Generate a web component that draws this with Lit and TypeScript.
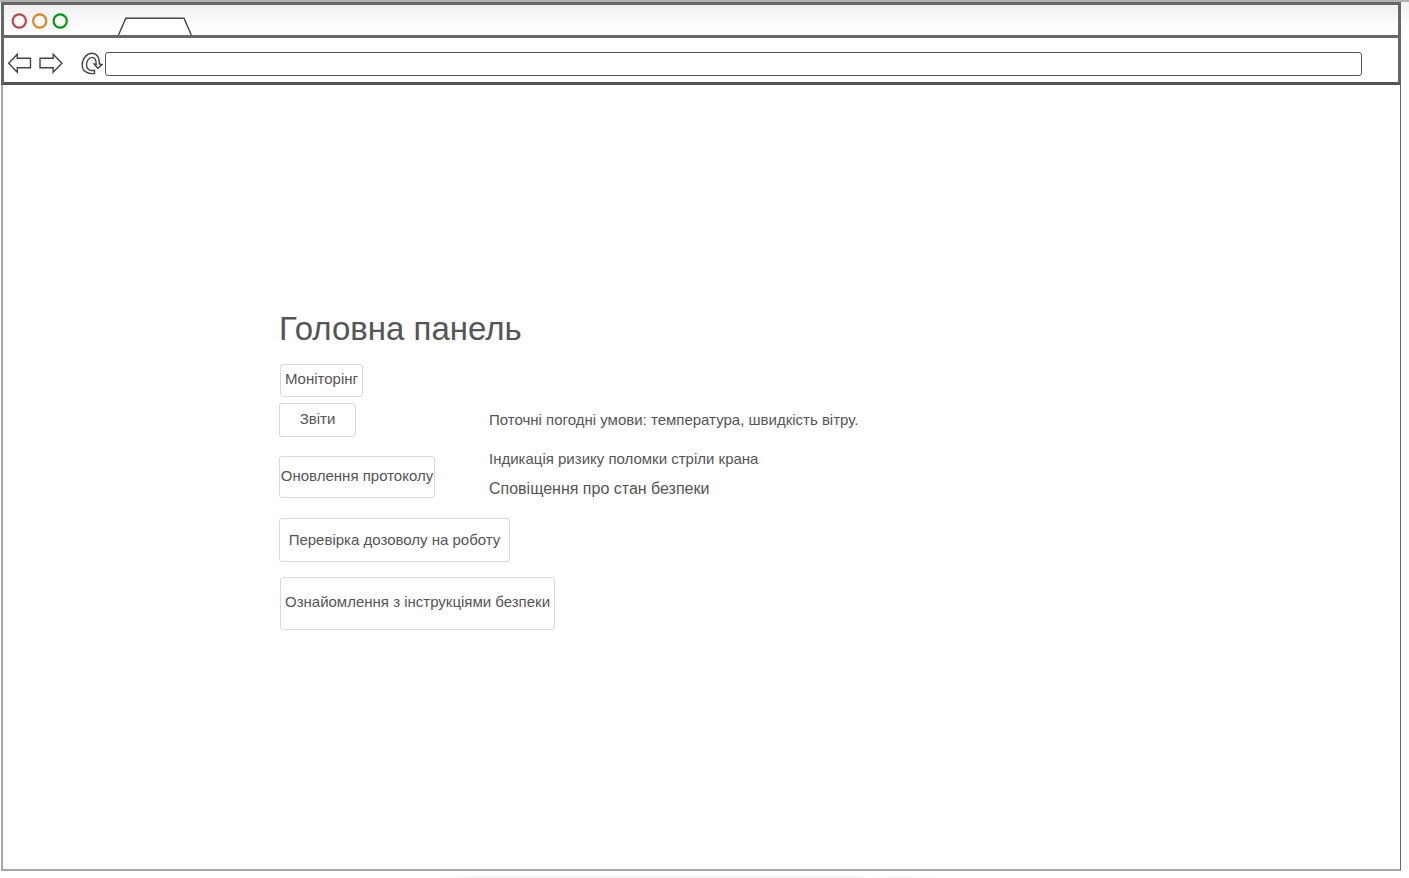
import { LitElement, html, css, svg } from "lit";
import { customElement } from "lit/decorators.js";

const NAV = [
  { label: "Моніторінг", size: "monitoring" },
  { label: "Звіти", size: "reports" },
  { label: "Оновлення протоколу", size: "protocol" },
  { label: "Перевірка дозоволу на роботу", size: "permit" },
  { label: "Ознайомлення з інструкціями безпеки", size: "safety" },
];

const arrow = svg`<path d="M1.2 10.2 L9.8 1.2 L9.8 5.2 L23 5.2 L23 14.8 L9.8 14.8 L9.8 19.2 Z"/>`;

@customElement("browser-bar")
export class BrowserBar extends LitElement {
  static styles = css`
    :host { display: block; }
    .tabs {
      display: flex;
      align-items: flex-end;
      box-sizing: border-box;
      height: 36px;
      border: 3px solid #666;
      padding-left: 7px;
      background: linear-gradient(#f0f0f0, #fdfdfd 22px, #fff);
    }
    .lights { display: block; margin-bottom: 5px; }
    .lights circle { stroke-width: 2.2; }
    .red { stroke: #b8474a; }
    .amber { stroke: #dc851c; }
    .green { stroke: #009a0b; }
    .tab { display: block; margin-left: 48px; }
    .tools {
      display: flex;
      align-items: center;
      box-sizing: border-box;
      height: 47px;
      border: 3px solid #666;
      border-top: 0;
      border-bottom-color: #555;
      padding: 6px 36px 0 3px;
      background: #fff;
    }
    button {
      display: block;
      padding: 0;
      border: 0;
      background: none;
    }
    svg { display: block; fill: none; stroke: #444; stroke-width: 1.4; }
    .forward { margin-left: 7px; }
    .reload { margin-left: 18px; }
    .address {
      flex: 1;
      min-width: 0;
      box-sizing: border-box;
      height: 24px;
      margin: 1px 0 0 2px;
      padding: 0 8px;
      border: 1px solid #555;
      border-radius: 3px;
      background: #fff;
      font: 15px "Liberation Sans", Arial, sans-serif;
      color: #555;
    }
  `;

  render() {
    return html`
      <div class="tabs">
        <svg class="lights" width="58" height="18" viewBox="0 0 58 18" aria-hidden="true">
          <circle class="red" cx="8.3" cy="9" r="6.6"/>
          <circle class="amber" cx="28.7" cy="9" r="6.6"/>
          <circle class="green" cx="49.2" cy="9" r="6.6"/>
        </svg>
        <svg class="tab" width="76" height="18" viewBox="0 0 76 18" aria-hidden="true">
          <path d="M1.5 18 L8.8 1.2 L67 1.2 L74.3 18" fill="#fff"/>
        </svg>
      </div>
      <div class="tools">
        <button type="button" aria-label="Назад">
          <svg width="25" height="21" viewBox="0 0 24 21">${arrow}</svg>
        </button>
        <button type="button" class="forward" aria-label="Вперед">
          <svg width="24" height="21" viewBox="0 0 24 21"><g transform="translate(24 0) scale(-1 1)">${arrow}</g></svg>
        </button>
        <button type="button" class="reload" aria-label="Оновити">
          <svg width="22" height="23" viewBox="0 0 22 23">
            <path d="M13.5 21.4 C8 22.4 1.2 20 1.2 13 C1.2 6.6 5.8 1.2 11 1.2 C16 1.2 18.8 6.2 18.2 12 L21 12.6 L16.8 16.2 L13.2 12 L15.2 12.2 C15.2 8.2 13.8 5.4 11 5.4 C7.8 5.4 5.5 9.4 5.5 13 C5.5 17 8.6 19.2 13.5 18.4 Z"/>
          </svg>
        </button>
        <input class="address" type="text" aria-label="Адреса" />
      </div>
    `;
  }
}

@customElement("app-root")
export class AppRoot extends LitElement {
  static styles = css`
    :host {
      display: flex;
      flex-direction: column;
      box-sizing: border-box;
      min-height: 100vh;
      border-top: 2px solid #b0b0b0;
      padding: 0 8px 0 1px;
      background: linear-gradient(#f0f0f0, #fdfdfd 22px, #fff 36px);
      font-family: "Liberation Sans", Arial, sans-serif;
      font-size: 15px;
      line-height: 20px;
      color: #555;
    }
    main {
      flex: 1;
      box-sizing: border-box;
      padding: 224px 24px 24px 276px;
      border: solid #a6a6a6;
      border-width: 0 1px 2px 2px;
      border-right-color: #666;
      background: #fff;
    }
    h1 {
      margin: 0;
      font-size: 33px;
      line-height: 40px;
      font-weight: 400;
    }
    .content { display: flex; margin-top: 15px; }
    nav {
      display: flex;
      flex-direction: column;
      align-items: flex-start;
      flex: none;
      width: 210px;
    }
    nav button {
      flex: none;
      box-sizing: border-box;
      padding: 0;
      border: 1px solid #d9d9d9;
      border-radius: 3px;
      background: #fff;
      font: inherit;
      color: inherit;
      white-space: nowrap;
    }
    .monitoring { width: 83px; height: 33px; margin-left: 1px; padding-bottom: 3px; }
    .reports { width: 77px; height: 34px; margin-top: 6px; padding-bottom: 2px; }
    .protocol { width: 156px; height: 42px; margin-top: 19px; padding-bottom: 2px; }
    .permit { width: 231px; height: 44px; margin-top: 20px; padding-bottom: 1px; }
    .safety { width: 275px; height: 53px; margin: 15px 0 0 1px; padding-bottom: 3px; }
    .status { flex: 1; min-width: 0; padding-top: 46px; }
    .status p { margin: 0 0 19px; }
    .status .risk { margin-bottom: 10px; }
    .status .notice { margin: 0; font-size: 16px; }
    .edge {
      width: 37%;
      height: 2px;
      margin: 5px auto 0 31%;
      background: linear-gradient(90deg, #fff, #f3f3f3 10%, #f3f3f3 80%, #fff 84%, #f8f8f8 88%, #fff);
    }
  `;

  render() {
    return html`
      <browser-bar></browser-bar>
      <main>
        <h1>Головна панель</h1>
        <div class="content">
          <nav>
            ${NAV.map((item) => html`<button type="button" class=${item.size}>${item.label}</button>`)}
          </nav>
          <section class="status">
            <p>Поточні погодні умови: температура, швидкість вітру.</p>
            <p class="risk">Індикація ризику поломки стріли крана</p>
            <p class="notice">Сповіщення про стан безпеки</p>
          </section>
        </div>
      </main>
      <div class="edge"></div>
    `;
  }
}
